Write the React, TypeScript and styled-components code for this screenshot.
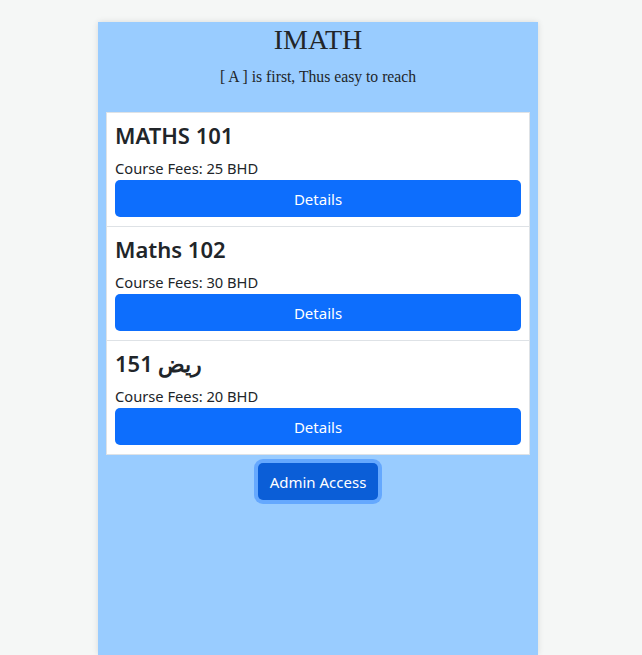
import React from 'react';
import styled, { createGlobalStyle } from 'styled-components';

// Global page setup
const GlobalStyle = createGlobalStyle`
    html, body {
        margin: 0;
        padding: 0;
        background: #f5f7f6;
        overflow: hidden;
    }
    * {
        box-sizing: border-box;
    }
`;

// Style-Component setup
const Page = styled.div`
    display: flex;
    justify-content: center;
    padding: 22px 6px 0 0;
`;

const Panel = styled.main`
    width: 440px;
    min-height: calc(100vh - 22px);
    background: #99ccff;
    box-shadow: 0 0 6px rgba(0, 0, 0, 0.12);
    padding: 0 8px;
    display: flex;
    flex-direction: column;
    align-items: center;
`;

const Title = styled.h1`
    margin: 0;
    padding-top: 2px;
    font-family: 'Liberation Serif', 'Times New Roman', serif;
    font-weight: 400;
    font-size: 28px;
    line-height: 32px;
    color: #212529;
`;

const Tagline = styled.p`
    margin: 12px 0 26px;
    font-family: 'Liberation Serif', 'Times New Roman', serif;
    font-size: 15.7px;
    line-height: 18px;
    color: #212529;
`;

const CourseList = styled.ul`
    list-style: none;
    margin: 0;
    padding: 0;
    width: 100%;
    background: #fff;
    border: 1px solid #dee2e6;
`;

const CourseItem = styled.li`
    padding: 8px 8px 9px;
    border-top: 1px solid #dee2e6;

    &:first-child {
        border-top: none;
    }
`;

const CourseName = styled.h3`
    margin: 0 0 7px;
    font-family: 'Noto Sans', 'Open Sans', sans-serif;
    font-weight: 600;
    font-size: 22px;
    line-height: 29px;
    color: #212529;
`;

const Fees = styled.p`
    margin: 0;
    font-family: 'Noto Sans', 'Open Sans', sans-serif;
    font-size: 14.7px;
    line-height: 23px;
    color: #212529;
`;

const Button = styled.button<{ $focused?: boolean; $block?: boolean }>`
    display: block;
    width: ${props => (props.$block ? '100%' : 'auto')};
    height: 37px;
    padding: 0 12px;
    border: none;
    border-radius: 5px;
    background: ${props => (props.$focused ? '#0b5ed7' : '#0d6efd')};
    box-shadow: ${props => (props.$focused ? '0 0 0 4px rgba(49, 132, 253, 0.5)' : 'none')};
    color: #fff;
    font-family: 'Noto Sans', 'Open Sans', sans-serif;
    font-size: 15px;
    white-space: nowrap;
    cursor: pointer;
`;

const AdminButton = styled(Button)`
    margin-top: 8px;
    min-width: 120px;
`;

// Course data
const courses = [
    { name: 'MATHS 101', fee: 25 },
    { name: 'Maths 102', fee: 30 },
    { name: 'ريض 151', fee: 20 },
];

// <App /> Functional Component
const App: React.FC = (): React.ReactElement => {
    return (
        <>
            <GlobalStyle />
            <Page>
                <Panel>
                    <Title>IMATH</Title>
                    <Tagline>[ A ] is first, Thus easy to reach</Tagline>
                    <CourseList>
                        {courses.map(c => (
                            <CourseItem key={c.name}>
                                <CourseName>{c.name}</CourseName>
                                <Fees>Course Fees: {c.fee} BHD</Fees>
                                <Button $block>Details</Button>
                            </CourseItem>
                        ))}
                    </CourseList>
                    <AdminButton $focused>Admin Access</AdminButton>
                </Panel>
            </Page>
        </>
    );
};

export default App;
